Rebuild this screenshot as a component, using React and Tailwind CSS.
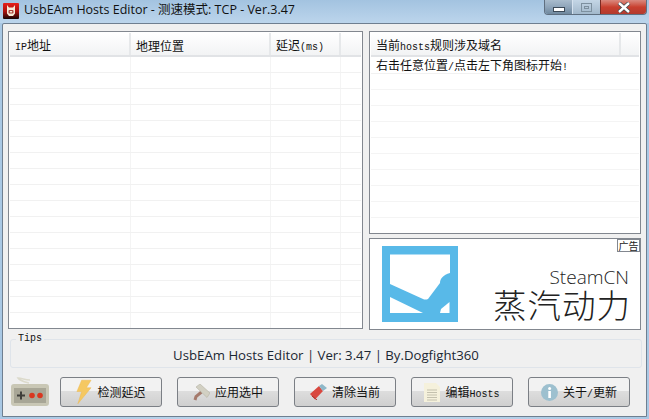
import React from "react";

const UI_FONT = "font-['Open_Sans','Noto_Sans_CJK_SC',sans-serif]";
const LIST_FONT = "font-['Noto_Sans_CJK_SC',sans-serif]";

const LEFT_ROWS = Array.from({ length: 17 });
const RIGHT_ROWS = Array.from({ length: 10 });

// latin inside the list and button labels is half the width of a CJK glyph
function Mono({ children }) {
    return <span className="font-['Liberation_Mono',monospace] text-[10px]">{children}</span>;
}

function AppIcon() {
    return (
        <svg width="16" height="16" viewBox="0 0 16 16">
            <defs>
                <linearGradient id="appIconBg" x1="0" y1="0" x2="0" y2="1">
                    <stop offset="0" stopColor="#e8201a" />
                    <stop offset="0.55" stopColor="#a5100d" />
                    <stop offset="1" stopColor="#140404" />
                </linearGradient>
            </defs>
            <rect width="16" height="16" rx="1" fill="url(#appIconBg)" />
            <path d="M4 2 L6 4.500 H10 L12 2 V10.500 L10 13 H6 L4 10.500 Z" fill="#f6ead8" />
            <rect x="5.500" y="7" width="5" height="3.500" rx="1" fill="#a83a34" />
            <rect x="6.800" y="8" width="2.400" height="1.500" fill="#f6ead8" />
        </svg>
    );
}

function WindowControls() {
    return (
        <div className="flex h-[15px] w-[103px] mr-[2px] rounded-b-[4px] overflow-hidden border border-t-0 border-[#5f6f80]">
            <div className="w-[28px] flex items-end justify-center pb-[2px] border-r border-[#d5e2ef] bg-gradient-to-b from-[#a9bccd] via-[#8fa5ba] to-[#6f889e]">
                <div className="w-[12px] h-[5px] border border-[#3c4a58] bg-white" />
            </div>
            <div className="w-[27px] flex items-center justify-center bg-gradient-to-b from-[#c4d6e6] to-[#a2b8cb]">
                <div className="w-[11px] h-[9px] border border-[#7d909f] flex items-center justify-center">
                    <div className="w-[5px] h-[3px] border border-[#7d909f]" />
                </div>
            </div>
            <div className="flex-1 flex items-center justify-center bg-gradient-to-b from-[#d9897f] via-[#c9402f] to-[#b23a2e] border-l border-[#7c2a22]">
                <svg width="14" height="11" viewBox="0 0 14 11">
                    <path d="M2 1 L12 10 M12 1 L2 10" stroke="#3f4a50" strokeWidth="4" />
                    <path d="M2 1 L12 10 M12 1 L2 10" stroke="#ffffff" strokeWidth="2.400" />
                </svg>
            </div>
        </div>
    );
}

function HeaderCell({ children, className }) {
    return (
        <div className={`flex items-center pl-[5px] pt-[3px] whitespace-nowrap border-r-2 border-[#e6e8ea] ${className}`}>
            <span>{children}</span>
        </div>
    );
}

function ListHeader({ children }) {
    return (
        <div className={`flex h-[24px] shrink-0 border-b-2 border-[#e1e3e6] bg-gradient-to-b from-white to-[#f2f3f4] text-[12px] text-[#111] ${LIST_FONT}`}>
            {children}
        </div>
    );
}

function LeftList() {
    return (
        <div className="w-[355px] h-[298px] border border-[#82878f] bg-white p-px overflow-hidden">
            <ListHeader>
                <HeaderCell className="w-[121px]"><Mono>IP</Mono>地址</HeaderCell>
                <HeaderCell className="w-[140px]">地理位置</HeaderCell>
                <HeaderCell className="w-[70px]">延迟<Mono>(ms)</Mono></HeaderCell>
            </ListHeader>
            {LEFT_ROWS.map((_, i) => (
                <div key={i} className="flex h-[16px] border-b border-[#f1f1f1]">
                    <div className="w-[121px] border-r border-[#f4f4f4]" />
                    <div className="w-[140px] border-r border-[#f4f4f4]" />
                    <div className="w-[70px] border-r border-[#f4f4f4]" />
                </div>
            ))}
        </div>
    );
}

function RightList() {
    return (
        <div className="w-[272px] h-[203px] border border-[#82878f] bg-white p-px overflow-hidden">
            <ListHeader>
                <HeaderCell className="w-[250px]">当前<Mono>hosts</Mono>规则涉及域名</HeaderCell>
            </ListHeader>
            <div className={`flex items-center pl-[5px] pt-[1px] h-[17px] whitespace-nowrap border-b border-[#f1f1f1] text-[12px] text-[#111] ${LIST_FONT}`}>
                <span>右击任意位置<Mono>/</Mono>点击左下角图标开始<Mono>!</Mono></span>
            </div>
            {RIGHT_ROWS.map((_, i) => (
                <div key={i} className="h-[16px] border-b border-[#f4f4f4]" />
            ))}
        </div>
    );
}

function SteamLogo() {
    return (
        <svg width="76" height="76" viewBox="0 0 76 76" className="shrink-0">
            <rect width="76" height="76" fill="#58b9e8" />
            <path d="M8 8.500 H68 V27 C61 29 58 33 58 37 L46 53 C44 54 42 53.500 41 53 L8 38 Z" fill="#fff" />
            <path d="M8 51 L41 67 H8 Z" fill="#fff" />
            <path d="M67.500 56 V67 H58 L59 63 Z" fill="#fff" />
        </svg>
    );
}

function AdBox() {
    return (
        <div className="relative flex w-[272px] h-[92px] items-center border border-[#82878f] bg-white pl-[12px]">
            <SteamLogo />
            <div className="flex-1 flex flex-col items-end pr-[9px] pt-[19px] font-['Noto_Sans_CJK_SC',sans-serif] text-[#222]">
                <div className="font-['Open_Sans',sans-serif] font-light text-[19px] leading-[20px] pr-[2px]">SteamCN</div>
                <div className="text-[33.500px] leading-[34px] font-extralight tracking-[1px] whitespace-nowrap">蒸汽动力</div>
            </div>
            <div className="absolute top-0 right-0 w-[23px] h-[13px] border border-[#82878f] bg-white text-[10px] leading-[11px] text-center whitespace-nowrap text-[#222] font-['Noto_Sans_CJK_SC',sans-serif]">
                广告
            </div>
        </div>
    );
}

function Bolt() {
    return (
        <svg width="16" height="26" viewBox="0 0 17 27">
            <path d="M6 1 H16 L11 9 H16 L2 26 L6 13 H1 Z" fill="#f5c861" stroke="#eeb94f" strokeWidth="0.500" />
        </svg>
    );
}

function Roller() {
    return (
        <svg width="17" height="17" viewBox="0 0 17 17">
            <path d="M2 16 L3 12.500 L8.500 8" fill="none" stroke="#a57a6c" strokeWidth="3" />
            <path d="M3 3 L7 0 L17 9 L14 13.500 Z" fill="#d2d0c3" stroke="#b5b3a5" strokeWidth="0.600" />
        </svg>
    );
}

function Eraser() {
    return (
        <svg width="17" height="16" viewBox="0 0 17 16">
            <path d="M0 10 L9 2 L13 7 L5 15.500 Z" fill="#d9483f" />
            <path d="M2 12 L7 16" stroke="#a82f2b" strokeWidth="1" />
            <path d="M9 2 L12 0 L17 4 L13 7 Z" fill="#8fb8c9" />
        </svg>
    );
}

function Doc() {
    return (
        <svg width="16" height="19" viewBox="0 0 16 19">
            <path d="M0 0 H12 L16 4 V19 H0 Z" fill="#f5f1dc" />
            <path d="M3 7 H13 M3 9.500 H13 M3 12 H13 M3 14.500 H13 M3 17 H13" stroke="#c4c1ae" strokeWidth="1" />
        </svg>
    );
}

function Info() {
    return (
        <svg width="17" height="17" viewBox="0 0 17 17">
            <circle cx="8.500" cy="8.500" r="8.500" fill="#9dc0cf" />
            <rect x="7.300" y="7" width="2.600" height="7" fill="#fff" />
            <circle cx="8.600" cy="4.500" r="1.500" fill="#fff" />
        </svg>
    );
}

function GamePad() {
    return (
        <svg width="40" height="32" viewBox="0 0 40 32" className="shrink-0 -mr-[5px]">
            <path d="M19 8 C15 7 10 6 8 3 C12 3 15 5 20 5" fill="none" stroke="#dcdacb" strokeWidth="1.500" />
            <rect x="1" y="9" width="38" height="22" rx="3" fill="#c9c7b5" />
            <rect x="4" y="13" width="32" height="15" fill="#a8a696" />
            <path d="M11 16.500 V24.500 M7 20.500 H15" stroke="#3f3f3a" strokeWidth="2" />
            <circle cx="22" cy="20.500" r="2.800" fill="#d9371f" />
            <circle cx="30" cy="20.500" r="2.800" fill="#d9371f" />
        </svg>
    );
}

function ToolButton({ icon, children }) {
    return (
        <button className={`flex items-center justify-center gap-[5px] w-[102px] h-[30px] rounded-[3px] border border-[#7b7f85] bg-gradient-to-b from-[#f2f2f2] from-45% via-[#dedede] via-45% to-[#cfcfcf] text-[12px] text-[#111] whitespace-nowrap ${LIST_FONT}`}>
            {icon}
            <span>{children}</span>
        </button>
    );
}

export default function App() {
    return (
        <div className={`w-[649px] h-[419px] flex flex-col overflow-hidden bg-gradient-to-r from-[#a9c8e4] via-[#c4dbef] to-[#a9c8e4] ${UI_FONT}`}>
            <div className="flex h-[23px] shrink-0 justify-between bg-gradient-to-b from-[#a3c3e0] to-[#bcd5ec]">
                <div className="flex items-center gap-[5px] pl-[3px] pb-[2px] text-[12.500px] text-[#111]">
                    <AppIcon />
                    <span>UsbEAm Hosts Editor - 测速模式: TCP - Ver.3.47</span>
                </div>
                <WindowControls />
            </div>

            <div className="mx-[2px] mb-[2px] flex-1 border border-[#6f7f90] rounded-t-[2px] bg-[#f0f0f0] px-[5px] pt-[7px] flex flex-col">
                <div className="flex gap-[6px]">
                    <LeftList />
                    <div className="flex flex-col gap-[4px]">
                        <RightList />
                        <AdBox />
                    </div>
                </div>

                <fieldset className="mt-[3px] ml-[2px] w-[632px] h-[35px] rounded-[3px] border border-[#dfe4ea] flex items-center justify-center">
                    <legend className="ml-[5px] px-[2px] text-[10px] leading-[12px] text-[#111] font-['Liberation_Mono',monospace]">Tips</legend>
                    <div className="w-full pt-[1px] text-center text-[13.200px] leading-[18px] text-[#1b2733]">
                        UsbEAm Hosts Editor | Ver: 3.47 | By.Dogfight360
                    </div>
                </fieldset>

                <div className="flex items-end gap-[15px] mt-[7px] pl-[2px]">
                    <GamePad />
                    <ToolButton icon={<Bolt />}>检测延迟</ToolButton>
                    <ToolButton icon={<Roller />}>应用选中</ToolButton>
                    <ToolButton icon={<Eraser />}>清除当前</ToolButton>
                    <ToolButton icon={<Doc />}>编辑<Mono>Hosts</Mono></ToolButton>
                    <ToolButton icon={<Info />}>关于<Mono>/</Mono>更新</ToolButton>
                </div>
            </div>
        </div>
    );
}
